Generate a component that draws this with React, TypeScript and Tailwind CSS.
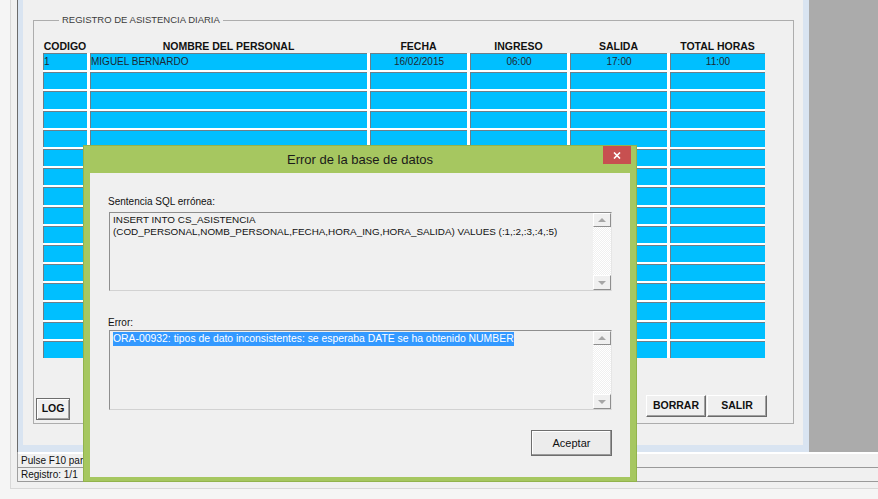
import React from "react";

type Col = { ancho: string; titulo: string };

const columnas: Col[] = [
  { ancho: "w-[44px]", titulo: "CODIGO" },
  { ancho: "w-[277px]", titulo: "NOMBRE DEL PERSONAL" },
  { ancho: "w-[97px]", titulo: "FECHA" },
  { ancho: "w-[97px]", titulo: "INGRESO" },
  { ancho: "w-[97px]", titulo: "SALIDA" },
  { ancho: "w-[95px]", titulo: "TOTAL HORAS" },
];

const filas: string[][] = [
  ["1", "MIGUEL BERNARDO", "16/02/2015", "06:00", "17:00", "11:00"],
  ...Array.from({ length: 15 }, () => ["", "", "", "", "", ""]),
];

function Celda({ ancho, texto, izq }: { ancho: string; texto: string; izq: boolean }) {
  return (
    <div
      className={`${ancho} h-[17.2px] border-t border-l border-[#6e7e88] bg-[#00bfff] text-[10px] leading-[15px] text-[#1c2833] whitespace-nowrap overflow-hidden ${
        izq ? "text-left" : "text-center"
      }`}
    >
      {texto}
    </div>
  );
}

function Scroll() {
  return (
    <div className="w-[18px] flex flex-col">
      <div className="h-[14px] flex items-center justify-center bg-[#f0f0f0] border border-t-white border-l-white border-r-[#8f8f8f] border-b-[#8f8f8f]">
        <div className="w-0 h-0 border-l-[4px] border-r-[4px] border-b-[4px] border-l-transparent border-r-transparent border-b-[#a6a6a6]" />
      </div>
      <div className="flex-1 bg-[repeating-conic-gradient(#f0f0f0_0_25%,#ffffff_0_50%)] bg-[length:2px_2px]" />
      <div className="h-[15px] flex items-center justify-center bg-[#f0f0f0] border border-t-white border-l-white border-r-[#8f8f8f] border-b-[#8f8f8f]">
        <div className="w-0 h-0 border-l-[4px] border-r-[4px] border-t-[4px] border-l-transparent border-r-transparent border-t-[#a6a6a6]" />
      </div>
    </div>
  );
}

function Memo({ alto, children }: { alto: string; children: React.ReactNode }) {
  return (
    <div
      className={`ml-[1px] w-[503px] ${alto} flex border border-t-[#8e8e8e] border-l-[#8e8e8e] border-r-[#e6e6e6] border-b-[#d2d2d2] bg-[#f0f0f0]`}
    >
      <div className="flex-1 pl-[3px] text-[10px] text-[#111] whitespace-nowrap overflow-hidden">{children}</div>
      <Scroll />
    </div>
  );
}

function BotonForm({ ancho, texto }: { ancho: string; texto: string }) {
  return (
    <div
      className={`${ancho} h-[22px] flex items-center justify-center bg-[#f0f0f0] border border-t-white border-l-white border-r-[#6a6a6a] border-b-[#6a6a6a] shadow-[inset_-1px_-1px_0_#a0a0a0] text-[10.5px] font-bold text-[#111]`}
    >
      {texto}
    </div>
  );
}

export default function App() {
  return (
    <div className="relative w-[878px] h-[499px] overflow-hidden bg-[#f5f5f5] font-['Liberation_Sans',Arial,sans-serif]">
      <div className="ml-[10px] h-[489px] border-l border-b border-[#d8d8d8] bg-[#f0f0f0] pl-[6px] flex flex-col">
        {/* area MDI */}
        <div className="flex h-[452px]">
          <div className="w-[1px] bg-[#6b6b6b]" />
          <div className="w-[791px] flex flex-col bg-[#d9e4f1] pl-[5px] pr-[6px] pb-[7px]">
            <div className="flex-1 bg-[#f0f0f0] pt-[20px]">
              <div className="relative ml-[10px] w-[761px] h-[404px] border border-[#adadad] flex flex-col">
                <span className="absolute left-[25px] -top-[7px] px-[3px] bg-[#f0f0f0] text-[9.5px] leading-[12px] text-[#3c3c3c]">
                  REGISTRO DE ASISTENCIA DIARIA
                </span>

                <div className="ml-[9px] mt-[18px] flex gap-[3px] h-[14px]">
                  {columnas.map((c) => (
                    <div key={c.titulo} className={`${c.ancho} text-center text-[10.5px] leading-[14px] font-bold text-[#111] whitespace-nowrap`}>
                      {c.titulo}
                    </div>
                  ))}
                </div>

                <div className="ml-[9px] w-[722px] flex flex-col gap-[2px] bg-white">
                  {filas.map((fila, i) => (
                    <div key={i} className="flex gap-[3px]">
                      {columnas.map((c, j) => (
                        <Celda key={j} ancho={c.ancho} texto={fila[j]} izq={j < 2} />
                      ))}
                    </div>
                  ))}
                </div>

                <div className="mt-auto mb-[3px] h-[25px] flex items-start pl-[2px] pr-[26px]">
                  <div className="mt-[3px] w-[34px] h-[22px] flex items-center justify-center bg-[#f0f0f0] border border-[#6d6d6d] shadow-[inset_1px_1px_0_#ffffff,inset_-1px_-1px_0_#a0a0a0] text-[10.5px] font-bold text-[#111]">
                    LOG
                  </div>
                  <div className="flex-1" />
                  <BotonForm ancho="w-[60px]" texto="BORRAR" />
                  <div className="w-[1px]" />
                  <BotonForm ancho="w-[60px]" texto="SALIR" />
                </div>
              </div>
            </div>
          </div>
          <div className="flex-1 bg-[#ababab]" />
        </div>

        {/* barra de estado */}
        <div className="flex flex-col border-l border-[#a0a0a0]">
          <div className="h-[2px] bg-white" />
          <div className="h-[13px] pl-[3px] text-[10px] leading-[13px] text-[#111]">Pulse F10 para salir</div>
          <div className="h-[15px] border-t border-b border-[#9a9a9a] pl-[3px] text-[10px] leading-[13px] text-[#111]">
            Registro: 1/1
          </div>
        </div>
      </div>

      {/* dialogo de error */}
      <div className="absolute left-[83px] top-[145px] w-[554px] h-[337px] bg-[#a6c760] border border-[#92b34c] flex flex-col px-[6px] pb-[4px]">
        <div className="h-[27px] flex items-center justify-center text-[13px] text-[#1a1a1a]">Error de la base de datos</div>
        <div className="absolute left-[519px] top-0 w-[28px] h-[18px] bg-[#c75050] flex items-center justify-center">
          <svg width="8" height="7" viewBox="0 0 8 7">
            <path d="M1 0.5 L7 6.5 M7 0.5 L1 6.5" stroke="#ffffff" strokeWidth="1.6" />
          </svg>
        </div>

        <div className="flex-1 bg-[#f0f0f0] flex flex-col pl-[18px]">
          <div className="mt-[23px] h-[12px] text-[10px] leading-[12px] text-[#111]">Sentencia SQL errónea:</div>
          <div className="mt-[4px]">
            <Memo alto="h-[79px]">
              <div className="pt-[1px] leading-[12px] text-[9.9px]">
                <div>INSERT INTO CS_ASISTENCIA</div>
                <div>(COD_PERSONAL,NOMB_PERSONAL,FECHA,HORA_ING,HORA_SALIDA) VALUES (:1,:2,:3,:4,:5)</div>
              </div>
            </Memo>
          </div>

          <div className="mt-[26px] h-[12px] text-[10px] leading-[12px] text-[#111]">Error:</div>
          <div className="mt-[1px]">
            <Memo alto="h-[80px]">
              <span className="inline-block bg-[#3399ff] text-white text-[10.4px] leading-[14px]">
                ORA-00932: tipos de dato inconsistentes: se esperaba DATE se ha obtenido NUMBER
              </span>
            </Memo>
          </div>

          <div className="mt-[20px] mr-[18px] self-end w-[81px] h-[26px] flex items-center justify-center bg-[#ececec] border border-[#6e6e6e] shadow-[inset_-1px_-1px_0_#9a9a9a,inset_1px_1px_0_#ffffff] text-[11px] text-[#111]">
            Aceptar
          </div>
        </div>
      </div>
    </div>
  );
}
